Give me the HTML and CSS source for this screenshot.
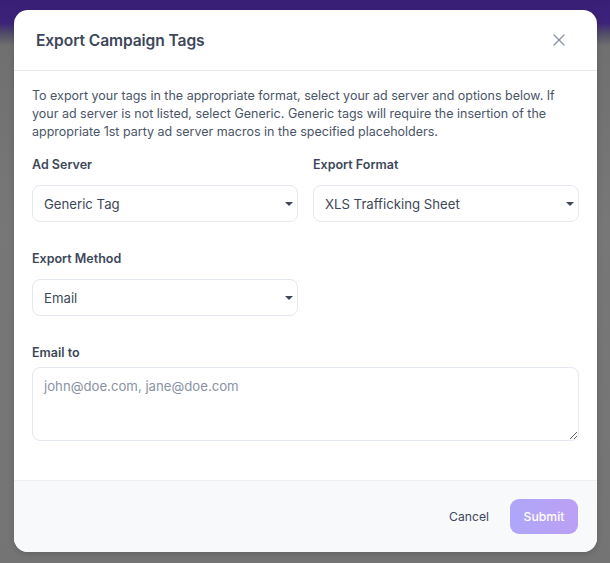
FILE: index.html
```html
<!DOCTYPE html>
<html lang="en">
<head>
<meta charset="utf-8">
<title>Export Campaign Tags</title>
<link rel="stylesheet" href="styles.css">
</head>
<body>
<div class="backdrop">
  <div class="topband"></div>
</div>
<div class="overlay">
  <div class="modal">
    <div class="modal-header">
      <h2 class="modal-title">Export Campaign Tags</h2>
      <button class="close-btn" aria-label="Close">
        <svg width="12" height="12" viewBox="0 0 12 12"><path d="M1 1L11 11M11 1L1 11" stroke="#8b95a7" stroke-width="1.4" stroke-linecap="round"/></svg>
      </button>
    </div>
    <div class="modal-body">
      <p class="intro">To export your tags in the appropriate format, select your ad server and options below. If your ad server is not listed, select Generic. Generic tags will require the insertion of the appropriate 1st party ad server macros in the specified placeholders.</p>
      <div class="fields">
        <div class="field">
          <label class="label">Ad Server</label>
          <div class="select"><span>Generic Tag</span><i class="caret"></i></div>
        </div>
        <div class="field">
          <label class="label">Export Format</label>
          <div class="select"><span>XLS Trafficking Sheet</span><i class="caret"></i></div>
        </div>
        <div class="field">
          <label class="label">Export Method</label>
          <div class="select"><span>Email</span><i class="caret"></i></div>
        </div>
        <div class="field full">
          <label class="label label-tight">Email to</label>
          <textarea class="textarea" placeholder="john@doe.com, jane@doe.com"></textarea>
        </div>
      </div>
    </div>
    <div class="modal-footer">
      <button class="btn-cancel">Cancel</button>
      <button class="btn-submit">Submit</button>
    </div>
  </div>
</div>
</body>
</html>
```
FILE: styles.css
```css
* { box-sizing: border-box; }
html, body { margin: 0; padding: 0; }
body {
  width: 610px;
  height: 563px;
  overflow: hidden;
  background: #737373;
  font-family: Inter, "Noto Sans", "Liberation Sans", sans-serif;
  position: relative;
}
.backdrop {
  position: absolute;
  inset: 0;
  background: linear-gradient(180deg, #6e6e6e 0%, #777 40%, #747474 100%);
}
.topband {
  height: 46px;
  background: linear-gradient(180deg, #3a1f78 0%, #3c2379 50%, #545068 75%, rgba(115,115,115,0) 100%);
}
.overlay {
  position: absolute;
  inset: 0;
  padding: 10px 13px 11px 14px;
}
.modal {
  height: 542px;
  background: #fff;
  border-radius: 14px;
  display: flex;
  flex-direction: column;
  overflow: hidden;
  box-shadow: 0 2px 6px rgba(0,0,0,0.15);
}
.modal-header {
  height: 61px;
  display: flex;
  align-items: center;
  justify-content: space-between;
  padding: 0 32px 0 22px;
  border-bottom: 1px solid #e5e8ef;
  flex-shrink: 0;
}
.modal-title {
  margin: 0;
  font-size: 15.6px;
  font-weight: 600;
  color: #3d4759;
  letter-spacing: -0.1px;
}
.close-btn {
  background: none;
  border: 0;
  padding: 0;
  width: 12px;
  height: 12px;
  display: flex;
}
.modal-body {
  flex: 1;
  padding: 16px 18px 0 18px;
}
.intro {
  margin: 0;
  font-size: 12.5px;
  line-height: 18px;
  color: #4a5568;
}
.fields {
  margin-top: 16px;
  display: grid;
  grid-template-columns: 1fr 1fr;
  column-gap: 15px;
  row-gap: 29px;
}
.field.full { grid-column: 1 / 3; }
.label {
  display: block;
  font-size: 12.5px;
  line-height: 16px;
  font-weight: 600;
  color: #3d4759;
  margin-bottom: 12px;
}
.label.label-tight { margin-bottom: 6px; }
.select {
  height: 37px;
  border: 1px solid #e3e7ef;
  border-radius: 8px;
  display: flex;
  align-items: center;
  justify-content: space-between;
  padding: 0 4px 0 11px;
  font-size: 13.2px;
  color: #3d4759;
}
.caret {
  width: 0;
  height: 0;
  border-left: 4px solid transparent;
  border-right: 4px solid transparent;
  border-top: 4px solid #3d4759;
}
.textarea {
  display: block;
  width: 100%;
  height: 74px;
  border: 1px solid #e3e7ef;
  border-radius: 8px;
  padding: 10px 11px;
  font-family: Inter, "Noto Sans", "Liberation Sans", sans-serif;
  font-size: 13.2px;
  color: #3d4759;
  resize: vertical;
  outline: none;
}
.textarea::placeholder { color: #8a93a5; }
.modal-footer {
  height: 72px;
  flex-shrink: 0;
  background: #f8f9fb;
  border-top: 1px solid #eceff4;
  display: flex;
  align-items: center;
  justify-content: flex-end;
  padding: 0 19px 0 0;
  gap: 21px;
}
.btn-cancel {
  background: none;
  border: 0;
  font-family: inherit;
  font-size: 12.2px;
  color: #3d4759;
  padding: 0;
}
.btn-submit {
  width: 68px;
  height: 35px;
  border: 0;
  border-radius: 9px;
  background: linear-gradient(90deg, #aea6f9 0%, #bca0f4 100%);
  color: #fff;
  font-family: inherit;
  font-size: 12.2px;
  font-weight: 500;
}
```
